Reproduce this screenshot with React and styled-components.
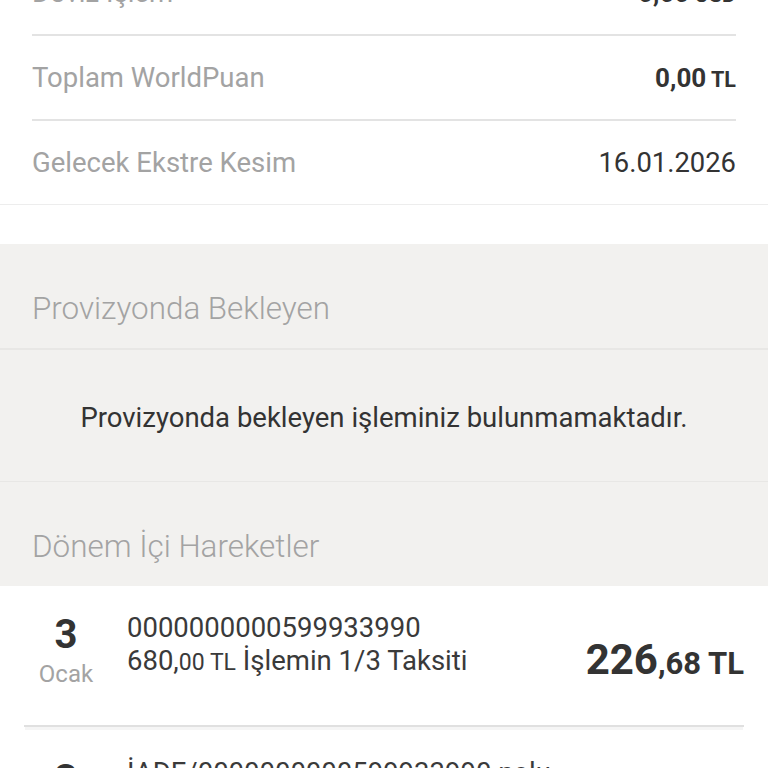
import React from 'react'
import styled, { createGlobalStyle } from 'styled-components'

const GlobalStyle = createGlobalStyle`
    html, body {
        margin: 0;
        padding: 0;
        background: #fff;
        font-family: Roboto, "Noto Sans", sans-serif;
        overflow: hidden;
    }
`

const Page = styled.div`
    width: 768px;
    height: 768px;
    overflow: hidden;
    background: #fff;
`

const Summary = styled.ul`
    list-style: none;
    margin: -49px 0 0;
    padding: 0 32px;
    border-bottom: 1px solid #ededed;
`

const SummaryRow = styled.li`
    display: flex;
    align-items: center;
    justify-content: space-between;
    height: 83px;
    border-bottom: ${({ last }) => last ? 'none' : '2px solid #e3e3e3'};
`

const Label = styled.span`
    font-size: 27.5px;
    color: #a3a3a3;
`

const Value = styled.span`
    font-size: ${({ bold }) => bold ? 26 : 27.4}px;
    color: #333;
    font-weight: ${({ bold }) => bold ? 700 : 400};
`

const Unit = styled.span`
    font-size: 21.5px;
`

const Gap = styled.div`
    height: 39px;
`

const Grey = styled.section`
    background: #f2f1ef;
`

const SectionTitle = styled.h2`
    margin: 0;
    padding: 48px 32px 22px;
    font-size: 31.4px;
    line-height: 34px;
    font-weight: 300;
    color: #a3a3a3;
    border-top: ${({ divided }) => divided ? '1px solid #e8e7e5' : 'none'};
`

const Empty = styled.p`
    margin: 0;
    height: 133px;
    display: flex;
    align-items: center;
    justify-content: center;
    padding-top: 4px;
    box-sizing: border-box;
    font-size: 27.5px;
    color: #333;
    border-top: 2px solid #e8e7e5;
`

const Moves = styled.ul`
    list-style: none;
    margin: 0;
    padding: 0 24px;
`

const Move = styled.li`
    display: flex;
    align-items: flex-start;
    height: 141px;
    box-sizing: border-box;
    padding-top: 22px;
    border-bottom: 2px solid #e0e0e0;
    box-shadow: 0 4px 0 -1px #f5f5f5;
    margin-bottom: 4px;
`

const Day = styled.div`
    width: 84px;
    flex: none;
    margin-top: 4px;
    display: flex;
    flex-direction: column;
    align-items: center;
    margin-right: 19px;
`

const DayNum = styled.span`
    font-size: 40px;
    line-height: 46px;
    font-weight: 700;
    color: #333;
`

const Month = styled.span`
    font-size: 24px;
    line-height: 32px;
    color: #a3a3a3;
`

const Info = styled.div`
    flex: 1;
    margin-top: 3px;
    display: flex;
    flex-direction: column;
    font-size: 27.5px;
    line-height: 33px;
    color: #3a3a3a;
    white-space: nowrap;
`

const Small = styled.span`
    font-size: 23px;
`

const Amount = styled.div`
    align-self: center;
    margin-top: -14px;
    font-weight: 700;
    color: #333;
    font-size: 31px;
    white-space: nowrap;
`

const Big = styled.span`
    font-size: 42px;
`

const summary = [
    { label: 'Döviz İşlem', value: '0,00', unit: 'USD', bold: true },
    { label: 'Toplam WorldPuan', value: '0,00', unit: 'TL', bold: true },
    { label: 'Gelecek Ekstre Kesim', value: '16.01.2026' },
]

const moves = [
    { day: '3', month: 'Ocak', title: '0000000000599933990', sub: ['680,', '00 TL', ' İşlemin 1/3 Taksiti'], amount: ['226', ',68 TL'] },
    { day: '3', month: 'Ocak', title: 'İADE/0000000000599933990 nolu', sub: ['680,', '00 TL', ' İade'], amount: ['680', ',00 TL'] },
]

const App = () => (
    <Page>
        <GlobalStyle />
        <Summary>
            {summary.map((item, i) => (
                <SummaryRow key={i} last={i === summary.length - 1}>
                    <Label>{item.label}</Label>
                    <Value bold={item.bold}>
                        {item.value}
                        {item.unit && <Unit> {item.unit}</Unit>}
                    </Value>
                </SummaryRow>
            ))}
        </Summary>
        <Gap />
        <Grey>
            <SectionTitle>Provizyonda Bekleyen</SectionTitle>
            <Empty>Provizyonda bekleyen işleminiz bulunmamaktadır.</Empty>
            <SectionTitle divided>Dönem İçi Hareketler</SectionTitle>
        </Grey>
        <Moves>
            {moves.map((m, i) => (
                <Move key={i}>
                    <Day>
                        <DayNum>{m.day}</DayNum>
                        <Month>{m.month}</Month>
                    </Day>
                    <Info>
                        <span>{m.title}</span>
                        <span>{m.sub[0]}<Small>{m.sub[1]}</Small>{m.sub[2]}</span>
                    </Info>
                    <Amount><Big>{m.amount[0]}</Big>{m.amount[1]}</Amount>
                </Move>
            ))}
        </Moves>
    </Page>
)

export default App
